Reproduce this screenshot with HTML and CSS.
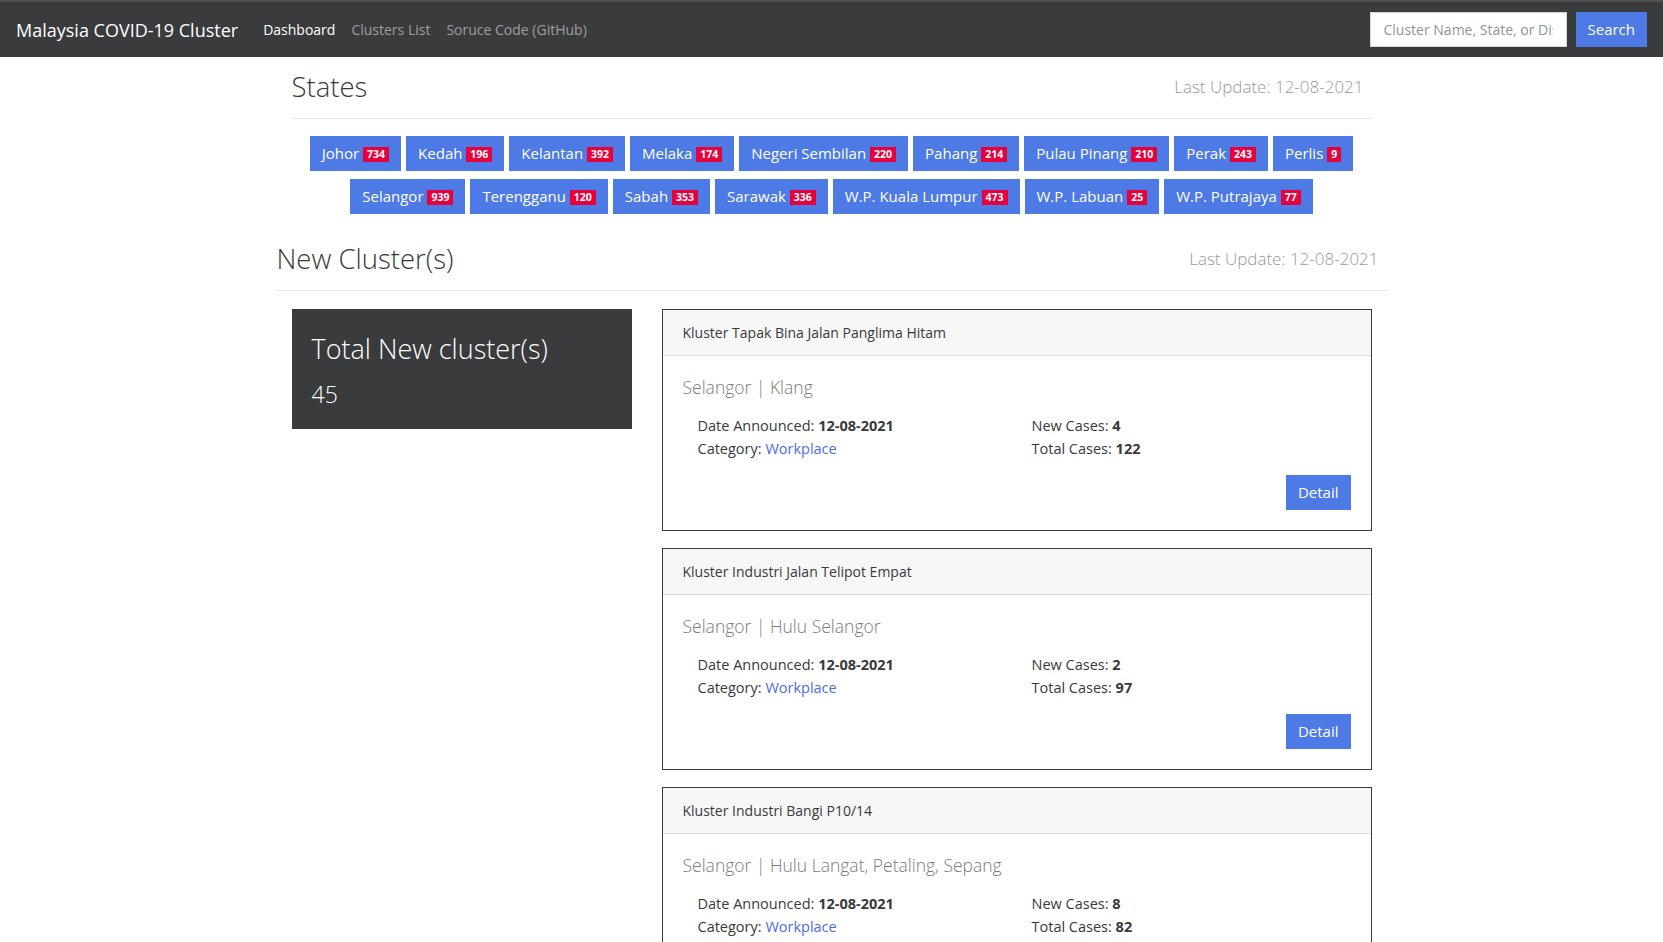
FILE: index.html
```html
<!DOCTYPE html>
<html lang="en">
<head>
<meta charset="utf-8">
<title>Malaysia COVID-19 Cluster</title>
<link rel="stylesheet" href="styles.css">
</head>
<body>
<nav class="navbar">
  <a class="brand" href="#">Malaysia COVID-19 Cluster</a>
  <ul class="nav">
    <li><a class="nav-link active" href="#">Dashboard</a></li>
    <li><a class="nav-link" href="#">Clusters List</a></li>
    <li><a class="nav-link" href="#">Soruce Code (GitHub)</a></li>
  </ul>
  <form class="search">
    <input class="search-input" type="text" placeholder="Cluster Name, State, or District">
    <button class="btn" type="button">Search</button>
  </form>
</nav>

<main class="container">
  <section class="inner">
    <div class="section-head">
      <h2>States</h2>
      <span class="updated">Last Update: 12-08-2021</span>
    </div>
    <hr>
    <div class="states">
      <a class="btn" href="#">Johor <span class="badge">734</span></a>
      <a class="btn" href="#">Kedah <span class="badge">196</span></a>
      <a class="btn" href="#">Kelantan <span class="badge">392</span></a>
      <a class="btn" href="#">Melaka <span class="badge">174</span></a>
      <a class="btn" href="#">Negeri Sembilan <span class="badge">220</span></a>
      <a class="btn" href="#">Pahang <span class="badge">214</span></a>
      <a class="btn" href="#">Pulau Pinang <span class="badge">210</span></a>
      <a class="btn" href="#">Perak <span class="badge">243</span></a>
      <a class="btn" href="#">Perlis <span class="badge">9</span></a>
      <a class="btn" href="#">Selangor <span class="badge">939</span></a>
      <a class="btn" href="#">Terengganu <span class="badge">120</span></a>
      <a class="btn" href="#">Sabah <span class="badge">353</span></a>
      <a class="btn" href="#">Sarawak <span class="badge">336</span></a>
      <a class="btn" href="#">W.P. Kuala Lumpur <span class="badge">473</span></a>
      <a class="btn" href="#">W.P. Labuan <span class="badge">25</span></a>
      <a class="btn" href="#">W.P. Putrajaya <span class="badge">77</span></a>
    </div>
  </section>

  <div class="section-head">
    <h2>New Cluster(s)</h2>
    <span class="updated">Last Update: 12-08-2021</span>
  </div>
  <hr>

  <div class="inner layout">
    <div class="side">
      <div class="total">
        <h3 class="total-title">Total New cluster(s)</h3>
        <p class="total-num">45</p>
      </div>
    </div>
    <div class="cards">
      <article class="card">
        <header class="card-header">Kluster Tapak Bina Jalan Panglima Hitam</header>
        <div class="card-body">
          <h5 class="card-title">Selangor | Klang</h5>
          <div class="details">
            <div>
              <p>Date Announced: <b>12-08-2021</b></p>
              <p>Category: <a href="#">Workplace</a></p>
            </div>
            <div>
              <p>New Cases: <b>4</b></p>
              <p>Total Cases: <b>122</b></p>
            </div>
          </div>
          <div class="actions"><a class="btn" href="#">Detail</a></div>
        </div>
      </article>
      <article class="card">
        <header class="card-header">Kluster Industri Jalan Telipot Empat</header>
        <div class="card-body">
          <h5 class="card-title">Selangor | Hulu Selangor</h5>
          <div class="details">
            <div>
              <p>Date Announced: <b>12-08-2021</b></p>
              <p>Category: <a href="#">Workplace</a></p>
            </div>
            <div>
              <p>New Cases: <b>2</b></p>
              <p>Total Cases: <b>97</b></p>
            </div>
          </div>
          <div class="actions"><a class="btn" href="#">Detail</a></div>
        </div>
      </article>
      <article class="card">
        <header class="card-header">Kluster Industri Bangi P10/14</header>
        <div class="card-body">
          <h5 class="card-title">Selangor | Hulu Langat, Petaling, Sepang</h5>
          <div class="details">
            <div>
              <p>Date Announced: <b>12-08-2021</b></p>
              <p>Category: <a href="#">Workplace</a></p>
            </div>
            <div>
              <p>New Cases: <b>8</b></p>
              <p>Total Cases: <b>82</b></p>
            </div>
          </div>
          <div class="actions"><a class="btn" href="#">Detail</a></div>
        </div>
      </article>
    </div>
  </div>
</main>
</body>
</html>
```

FILE: styles.css
```css
* { box-sizing: border-box; }

html, body {
  margin: 0;
  padding: 0;
}

body {
  font-family: "Open Sans", "Noto Sans", sans-serif;
  font-size: 15px;
  color: #373a3c;
  background: #fff;
}

a { text-decoration: none; }

/* Navbar */
.navbar {
  display: flex;
  align-items: center;
  height: 57px;
  padding: 0 16px;
  background: #393b3d;
  border-top: 2px solid #4e5052;
}

.brand {
  color: #fff;
  font-size: 18px;
  margin-right: 17px;
  white-space: nowrap;
}

.nav {
  display: flex;
  list-style: none;
  margin: 0;
  padding: 0;
}

.nav-link {
  display: block;
  padding: 0 8px;
  font-size: 14px;
  color: rgba(255, 255, 255, 0.5);
}

.nav-link.active { color: #fff; }

.search {
  display: flex;
  align-items: center;
  margin-left: auto;
}

.search-input {
  width: 197px;
  height: 35px;
  padding: 0 13px;
  font-family: inherit;
  font-size: 14px;
  color: #373a3c;
  border: 1px solid #ced4da;
  border-radius: 0;
  margin-right: 9px;
}

.search-input::placeholder { color: #8e959c; }

.btn {
  display: inline-block;
  background: #4d7ae4;
  color: #fff;
  font-family: inherit;
  font-size: 15px;
  line-height: 23px;
  padding: 6px 12px;
  border: 0;
  border-radius: 0;
  white-space: nowrap;
}

.search .btn { padding: 6px 12px; }

/* Layout */
.container {
  width: 1140px;
  margin: 0 auto;
  padding: 0 15px;
}

.inner {
  padding: 0 15px;
}

.section-head {
  display: flex;
  justify-content: space-between;
  align-items: center;
  height: 38px;
  padding-right: 8px;
}

.inner > .section-head { margin-top: 10px; }

h2 {
  margin: 0;
  font-size: 27.5px;
  font-weight: 300;
  color: #373a3c;
}

.updated {
  font-size: 17px;
  font-weight: 300;
  color: #9a9a9a;
}

hr {
  border: 0;
  border-top: 1px solid #e5e5e5;
  margin: 13px 0 17px;
}

/* States */
.states {
  display: flex;
  flex-wrap: wrap;
  justify-content: center;
  column-gap: 5px;
  row-gap: 8px;
  padding: 0 10px;
  margin-bottom: 25px;
}

.badge {
  display: inline-block;
  background: #e6003c;
  color: #fff;
  font-size: 10.5px;
  font-weight: 700;
  line-height: 11px;
  padding: 2px 4px;
  vertical-align: 1px;
}

/* New clusters */
.layout {
  display: grid;
  grid-template-columns: 340px 1fr;
  column-gap: 30px;
  align-items: start;
  padding-top: 1px;
}

.total {
  background: #393b3d;
  color: #fff;
  padding: 20px;
}

.total-title {
  margin: 0;
  font-size: 27px;
  line-height: 40px;
  font-weight: 300;
}

.total-num {
  margin: 10px 0 0;
  font-size: 23px;
  line-height: 30px;
  font-weight: 300;
}

.card {
  border: 1px solid #3a3a3a;
  margin-bottom: 17px;
}

.card-header {
  background: #f7f7f7;
  border-bottom: 1px solid #dcdcdc;
  padding: 12px 20px;
  font-size: 14px;
  line-height: 21px;
}

.card-body {
  padding: 20px;
}

.card-title {
  margin: 0 0 17px;
  font-size: 17.5px;
  line-height: 22px;
  font-weight: 300;
  color: #7b7b7b;
}

.details {
  display: grid;
  grid-template-columns: 1fr 1fr;
  column-gap: 30px;
  padding: 0 15px;
}

.details p {
  margin: 0;
  font-size: 14.5px;
  line-height: 22.5px;
}

.details a { color: #4f6ce3; }

.actions {
  display: flex;
  justify-content: flex-end;
  margin-top: 15px;
}
```
